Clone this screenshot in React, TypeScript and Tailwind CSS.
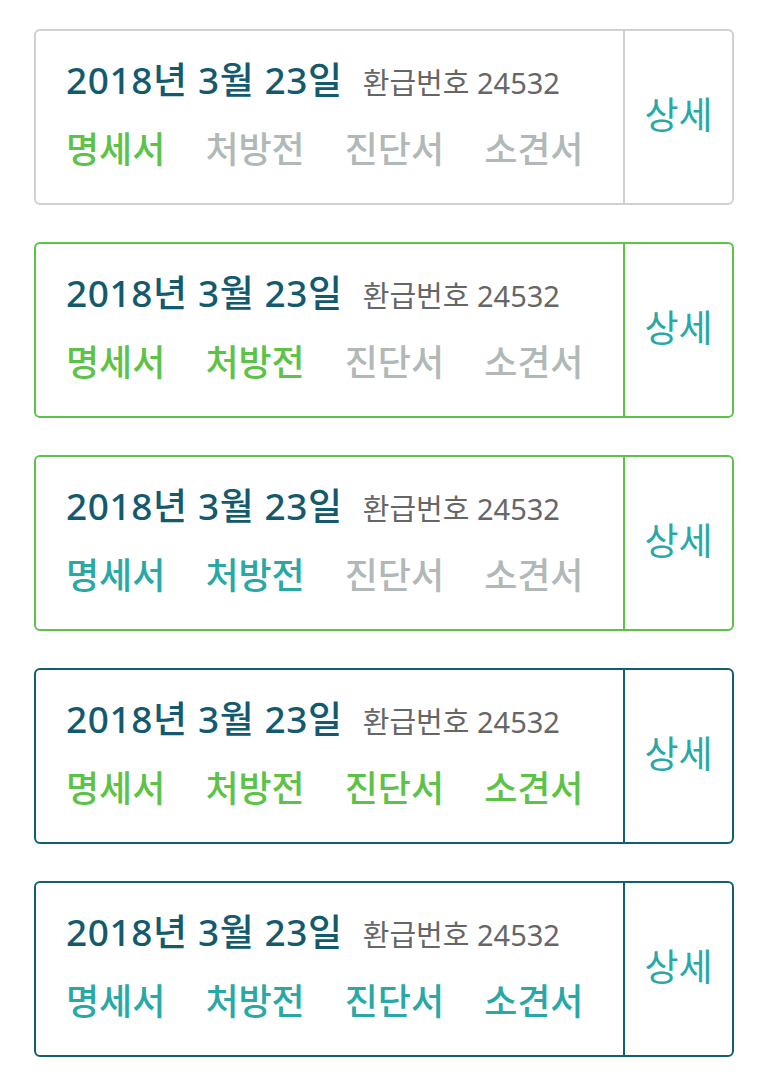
import React from 'react';

type Tone = 'on' | 'off' | 'done';

const docs = ['명세서', '처방전', '진단서', '소견서'];

const cards: { border: string; tones: Tone[] }[] = [
  { border: 'border-[#d0d0d0]', tones: ['on', 'off', 'off', 'off'] },
  { border: 'border-[#5cc348]', tones: ['on', 'on', 'off', 'off'] },
  { border: 'border-[#5cc348]', tones: ['done', 'done', 'off', 'off'] },
  { border: 'border-[#135e72]', tones: ['on', 'on', 'on', 'on'] },
  { border: 'border-[#135e72]', tones: ['done', 'done', 'done', 'done'] },
];

const toneClass: Record<Tone, string> = {
  on: 'text-[#5cc348]',
  off: 'text-[#b0b9b8]',
  done: 'text-[#2aa8a6]',
};

function RefundCard({ border, tones }: { border: string; tones: Tone[] }) {
  return (
    <div className={`flex h-[176px] rounded-md border-2 bg-white ${border}`}>
      <div className="flex-1 pl-[30px] pt-[23px]">
        <div className="flex items-baseline leading-[52px]">
          <span className="text-[37px] font-medium tracking-[0.6px] text-[#135a6e]">2018년 3월 23일</span>
          <span className="ml-[20px] text-[29px] text-[#666666]">환급번호 24532</span>
        </div>
        <div className="mt-[15px] flex gap-[40px] leading-[52px]">
          {docs.map((d, i) => (
            <span key={d} className={`text-[36px] font-medium ${toneClass[tones[i]]}`}>
              {d}
            </span>
          ))}
        </div>
      </div>
      <div className={`flex w-[109px] items-center justify-center border-l-2 ${border}`}>
        <span className="pb-[4px] text-[37px] text-[#2aa8a6]">상세</span>
      </div>
    </div>
  );
}

export default function App() {
  return (
    <div
      className="min-h-screen bg-white px-[34px] pt-[29px]"
      style={{ fontFamily: '"Noto Sans", "Noto Sans CJK KR", sans-serif' }}
    >
      <div className="flex w-[700px] flex-col gap-[37px]">
        {cards.map((c, i) => (
          <RefundCard key={i} border={c.border} tones={c.tones} />
        ))}
      </div>
    </div>
  );
}
